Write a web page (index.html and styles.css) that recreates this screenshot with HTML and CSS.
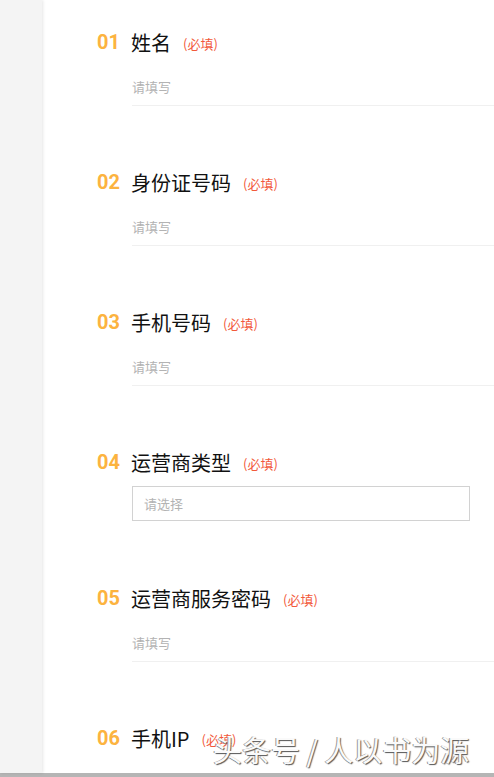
FILE: index.html
```html
<!DOCTYPE html>
<html lang="zh-CN">
<head>
<meta charset="utf-8">
<title>表单</title>
<link rel="stylesheet" href="styles.css">
</head>
<body>
<div class="page">
  <aside class="side"></aside>
  <main class="main">
    <section class="field">
      <div class="head"><span class="num">01</span><span class="label">姓名</span><span class="req">(必填)</span></div>
      <div class="input">请填写</div>
    </section>
    <section class="field">
      <div class="head"><span class="num">02</span><span class="label">身份证号码</span><span class="req">(必填)</span></div>
      <div class="input">请填写</div>
    </section>
    <section class="field">
      <div class="head"><span class="num">03</span><span class="label">手机号码</span><span class="req">(必填)</span></div>
      <div class="input">请填写</div>
    </section>
    <section class="field field-select">
      <div class="head"><span class="num">04</span><span class="label">运营商类型</span><span class="req">(必填)</span></div>
      <div class="select">请选择</div>
    </section>
    <section class="field">
      <div class="head"><span class="num">05</span><span class="label">运营商服务密码</span><span class="req">(必填)</span></div>
      <div class="input">请填写</div>
    </section>
    <section class="field">
      <div class="head"><span class="num">06</span><span class="label">手机IP</span><span class="req">(必填)</span></div>
    </section>
  </main>
</div>
<div class="watermark">头条号 / 人以书为源</div>
<div class="bottom-bar"></div>
</body>
</html>
```
FILE: styles.css
```css
html, body {
  margin: 0;
  padding: 0;
  height: 100%;
  overflow: hidden;
  background: #ffffff;
  font-family: "Noto Sans CJK SC", "Microsoft YaHei", sans-serif;
}
.page {
  display: flex;
  height: 773px;
}
.side {
  width: 42px;
  flex: none;
  background: #f4f4f4;
  box-shadow: 1px 0 3px rgba(0,0,0,0.10);
  position: relative;
  z-index: 1;
}
.main {
  flex: 1;
  padding: 28px 0 0 55px;
  background: #fff;
}
.field {
  margin-bottom: 62px;
}
.field-select {
  margin-bottom: 63px;
}
.head {
  display: flex;
  align-items: center;
  height: 28px;
}
.num {
  width: 34px;
  flex: none;
  font-family: "Liberation Sans Narrow", "Roboto", sans-serif;
  font-weight: bold;
  font-size: 20px;
  color: #fcb33f;
}
.label {
  font-size: 20px;
  color: #111;
}
.req {
  margin-left: 12px;
  font-size: 13px;
  color: #f2593a;
  padding-top: 2px;
}
.input {
  margin: 13px 0 0 35px;
  height: 36px;
  line-height: 36px;
  font-size: 13px;
  color: #b3b3b3;
  border-bottom: 1px solid #f0f0f0;
}
.select {
  margin: 10px 0 0 35px;
  width: 325px;
  height: 33px;
  line-height: 33px;
  padding-left: 11px;
  border: 1px solid #d2d2d2;
  font-size: 13px;
  color: #b3b3b3;
}
.watermark {
  position: absolute;
  left: 213px;
  top: 729px;
  font-size: 29px;
  line-height: 40px;
  color: #fafafa;
  text-shadow: 1px 1px 1px #555, -1px 0 0 #999;
  white-space: nowrap;
}
.bottom-bar {
  height: 4px;
  background: #b5b5b5;
}
```
